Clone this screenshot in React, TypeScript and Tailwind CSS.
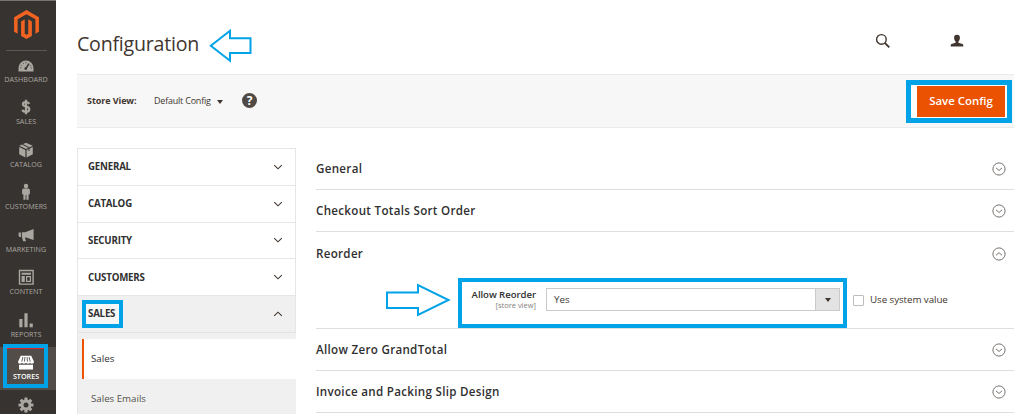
import React from 'react';

const Chevron = ({ up = false }: { up?: boolean }) => (
  <svg width="10" height="8" viewBox="0 0 10 8" fill="none" stroke="#41362f" strokeWidth="1.1">
    <path d={up ? 'M1.2 5.8 L5 2.2 L8.8 5.8' : 'M1.2 2.2 L5 5.8 L8.8 2.2'} />
  </svg>
);

const CircleChevron = ({ up = false }: { up?: boolean }) => (
  <svg width="14" height="14" viewBox="0 0 14 14" fill="none" stroke="#777370" strokeWidth="1">
    <circle cx="7" cy="7" r="6.1" />
    <path d={up ? 'M4 8.3 L7 5.7 L10 8.3' : 'M4 5.9 L7 8.5 L10 5.9'} />
  </svg>
);

const icons: Record<string, React.ReactNode> = {
  DASHBOARD: (
    <g>
      <path d="M1.5 15.5 V12 a7.5 7.5 0 0 1 15 0 V15.5z" />
      <path d="M8.6 13 L12 7.6" stroke="#373330" strokeWidth="1.5" />
      <circle cx="8.7" cy="12.6" r="1.3" fill="#373330" />
      <path d="M3.8 12.3 a5.2 5.2 0 0 1 7-5.2" fill="none" stroke="#373330" strokeWidth=".9" strokeDasharray="1 1.6" />
      <path d="M13.5 9.3 a5 5 0 0 1 .8 3.3" fill="none" stroke="#373330" strokeWidth=".9" strokeDasharray="1 1.3" />
    </g>
  ),
  SALES: (
    <path d="M12.3 5.8 C11.5 4.6 10.2 4.1 8.8 4.1 C6.9 4.1 5.9 5 5.9 6.2 C5.9 9.3 12.3 7.5 12.3 11.3 C12.3 13 10.9 13.9 9 13.9 C7.3 13.9 6 13.3 5.1 12 M9 1.8 V16.2" fill="none" stroke="#aaa6a0" strokeWidth="2.2" />
  ),
  CATALOG: (
    <g>
      <path d="M9 1.8 L15.8 4.8 L9 8 L2.2 4.8z M2.2 6 L8.4 9 V16.4 L2.2 13.2z M15.8 6 L9.6 9 V16.4 L15.8 13.2z" />
      <path d="M5.2 3.2 L12 6.6 V10" fill="none" stroke="#373330" strokeWidth="1" />
    </g>
  ),
  CUSTOMERS: (
    <path d="M9 .8 a2.2 2.2 0 1 1 0 4.4 a2.2 2.2 0 0 1 0-4.4z M6.5 5.6 h5 q1.3.2 1.4 1.6 v4 h-1.3 V16.8 H9.4 V12 h-.8 v4.8 H6.4 v-5.6 H5.1 v-4 q.1-1.4 1.4-1.6z" />
  ),
  MARKETING: (
    <path d="M16.6 3 V14 L9 11.5 H7.9 L9 15.3 H6.2 L4.9 11.3 V6.3 H8.2z M1.6 6.5 H3.9 V11.1 H2.4 L1.6 10z" />
  ),
  CONTENT: (
    <path fillRule="evenodd" d="M1.8 1.8 h15 v15 h-15z M3.2 3.2 v12.2 h12.2 V3.2z M4.6 4.8 h9.4 v2 H4.6z M4.6 8 h3.2 v6 H4.6z M9 8 h5 v6 H9z M10.2 9.2 v3.6 h2.6 V9.2z" />
  ),
  REPORTS: <path d="M2.3 8 h3.2 v8.3 H2.3z M7.4 2.2 h3.2 v14.1 H7.4z M12.6 12.4 h3.2 v3.9 h-3.2z" />,
  STORES: (
    <g fill="#ffffff">
      <path d="M3.8 2.8 H14.2 L17 8.8 q0 2-2 2 t-2-1 q-.8 1-2 1 t-2-1 q-.8 1-2 1 t-2-1 q-.8 1-2 1 q-2 0-2-2z M2 11.8 h14 v4.8 H2z" />
      <path d="M5.9 4 L4.8 8.6 M7.9 4 L7.5 8.6 M10.1 4 L10.5 8.6 M12.1 4 L13.2 8.6" stroke="#524d49" strokeWidth=".9" />
    </g>
  ),
};

const NavItem = ({ name }: { name: string }) => (
  <div
    className={
      name === 'STORES'
        ? 'relative flex h-[42.5px] flex-col items-center bg-[#524d49] pt-[6px] font-semibold text-white'
        : 'relative flex h-[42.5px] flex-col items-center pt-[6px] text-[#aaa6a0]'
    }
  >
    <svg width="18" height="18" viewBox="0 0 18 18" fill="#aaa6a0" className="shrink-0">
      {icons[name]}
    </svg>
    <span className="mt-px text-[7.2px] leading-[9px]">{name}</span>
    {name === 'STORES' && (
      <span className="absolute -top-[3px] left-[3px] h-[44px] w-[45px] border-[4px] border-[#00a2e8]">
        <span className="block h-px bg-[#e22626]" />
      </span>
    )}
  </div>
);

const navItems = ['DASHBOARD', 'SALES', 'CATALOG', 'CUSTOMERS', 'MARKETING', 'CONTENT', 'REPORTS', 'STORES'];

const Sidebar = () => (
  <aside className="flex w-14 shrink-0 flex-col border-t border-[#77736f] bg-[#373330]">
    <div className="flex h-[49px] shrink-0 justify-center pt-[9px] pr-[4px]">
      <svg width="25" height="29" viewBox="0 0 24 28" fill="#f26322">
        <path d="M12 0 L24 7 V21 L20.6 23 V9 L12 4 L3.4 9 V23 L0 21 V7z" />
        <path d="M6.8 11 L10.3 9 V23 L12 24 L13.7 23 V9 L17.2 11 V25 L12 28 L6.8 25z" />
      </svg>
    </div>
    <div className="ml-[6px] h-px w-[41px] shrink-0 bg-[#5d5854]" />
    <nav className="-mt-[1.5px] flex flex-col [&>div]:pr-[4px]">
      {navItems.map((n) => (
        <NavItem key={n} name={n} />
      ))}
    </nav>
    <div className="flex justify-center pt-[7px] pr-[4px]">
      <svg width="16" height="16" viewBox="-8 -8 16 16" fill="#aaa6a0">
        {[0, 45, 90, 135].map((a) => (
          <rect key={a} x="-1.6" y="-7.5" width="3.2" height="15" rx=".5" transform={`rotate(${a})`} />
        ))}
        <circle r="5.4" />
        <circle r="2.5" fill="#373330" />
      </svg>
    </div>
  </aside>
);

const Header = () => (
  <header className="flex h-[74px] shrink-0 items-start">
    <h1 className="mt-[30px] w-[132px] text-[19.6px] leading-[28px] tracking-[-0.22px] whitespace-nowrap text-[#41362f]">Configuration</h1>
    <svg width="44" height="34" viewBox="0 0 44 34" fill="none" stroke="#00a2e8" strokeWidth="2" className="mt-[29px]">
      <path d="M1.8 16.7 L21 1.8 V9.3 H41.5 V24 H21 V31.7z" />
    </svg>
    <svg width="16" height="16" viewBox="0 0 16 16" fill="none" stroke="#41362f" className="mt-[33px] ml-[622px]">
      <circle cx="6.4" cy="6.4" r="4.8" strokeWidth="1.4" />
      <path d="M9.8 9.8 L14.3 14.3" strokeWidth="1.9" />
    </svg>
    <svg width="14" height="14" viewBox="0 0 14 14" fill="#41362f" className="mt-[34px] ml-[59px]">
      <path d="M7 .8 C9 .8 10 2 9.9 3.9 C9.8 5.8 9 6.8 8.5 7.3 V8.7 L12.5 10 Q13.3 10.4 13.3 11.2 V12.5 H.7 V11.2 Q.7 10.4 1.5 10 L5.5 8.7 V7.3 C5 6.8 4.2 5.8 4.1 3.9 C4 2 5 .8 7 .8z" />
    </svg>
  </header>
);

const Toolbar = () => (
  <div className="flex h-[54px] w-[937px] shrink-0 items-center border-y border-[#ebebeb] bg-[#f7f7f7] pl-[10px] text-[#41362f]">
    <span className="w-[67px] text-[9px] font-bold tracking-[-0.08px] whitespace-nowrap">Store View:</span>
    <span className="w-[63px] text-[9px] tracking-[-0.22px] whitespace-nowrap">Default Config</span>
    <svg width="6" height="4" viewBox="0 0 6 4" fill="#41362f" className="mt-px"><path d="M0 0 H6 L3 4z" /></svg>
    <span className="-mt-px ml-[19px] flex size-[15px] items-center justify-center rounded-full bg-[#514943] text-[12px] leading-none font-bold text-white">?</span>
    <div className="mr-[2px] ml-auto flex h-[43px] w-[106px] shrink-0 items-center justify-center border-[5px] border-[#00a2e8] bg-[#fdfdfd] pl-[4px]">
      <button className="h-[31px] w-[88px] bg-[#eb5202] text-[11.4px] font-semibold tracking-[0.02px] whitespace-nowrap text-white">Save Config</button>
    </div>
  </div>
);

const ConfigNav = () => (
  <div className="flex w-[219px] shrink-0 flex-col border border-[#e6e6e6] text-[#303030]">
    {['GENERAL', 'CATALOG', 'SECURITY', 'CUSTOMERS'].map((t) => (
      <div key={t} className="flex h-[36.8px] shrink-0 items-center justify-between border-b border-[#e6e6e6] pr-[12px] pl-[10px] text-[9.7px] font-bold tracking-[-0.2px]">
        <span className="pt-px">{t}</span>
        <Chevron />
      </div>
    ))}
    <div className="flex h-[36.8px] shrink-0 items-center justify-between border-b border-[#e3e3e3] bg-[#f0f0f0] pr-[12px] pl-[4px] text-[9.7px] font-bold tracking-[-0.2px]">
      <span className="-mt-px flex h-[28px] w-[41px] items-center border-[4px] border-[#00a2e8] bg-[#f7f7f7] pt-px pl-[2px]">SALES</span>
      <Chevron up />
    </div>
    <div className="-mr-px flex h-[82px] flex-col bg-[#f0f0f0] pt-[6px] pl-[4px]">
      <div className="flex h-10 shrink-0 items-center border-l-2 border-[#eb5202] bg-white pt-px pl-[7px] text-[9.8px] font-medium">Sales</div>
      <div className="flex h-10 shrink-0 items-center pl-[9px] text-[9.7px] text-[#55504c]">Sales Emails</div>
    </div>
  </div>
);

const SectionTitle = ({ title, up = false }: { title: string; up?: boolean }) => (
  <div className="flex h-[41px] shrink-0 items-center justify-between pr-[8px]">
    <h2 className="text-[11.6px] font-semibold tracking-[0.3px] text-[#303030]">{title}</h2>
    <CircleChevron up={up} />
  </div>
);

const ReorderField = () => (
  <div className="flex h-[55px] items-start pt-[4px] pl-[69px]">
    <svg width="66" height="34" viewBox="0 0 66 34" fill="none" stroke="#00a2e8" strokeWidth="2" className="mt-[5px] shrink-0">
      <path d="M2 9.5 H33 V2 L63.5 17 L33 32 V25 H2z" />
    </svg>
    <div className="ml-[7px] flex h-[50px] w-[389px] shrink-0 items-start border-[4px] border-[#00a2e8] bg-white pt-[6px]">
      <div className="w-[74px] text-right text-[#303030]">
        <div className="pt-px text-[9.6px] leading-[12px] font-semibold tracking-[-0.06px] whitespace-nowrap">Allow Reorder</div>
        <div className="text-[7.5px] leading-[8px] text-[#85807c]">[store view]</div>
      </div>
      <div className="ml-[10px] flex h-[23px] w-[294px] border border-[#cacaca] text-[9.8px] text-[#403b37]">
        <span className="flex flex-1 items-center pt-px pl-[7px]">Yes</span>
        <span className="flex w-6 items-center justify-center border-l border-[#cacaca] bg-[#e3e3e3]">
          <svg width="6" height="4" viewBox="0 0 6 4" fill="#41362f"><path d="M0 0 H6 L3 4z" /></svg>
        </span>
      </div>
    </div>
    <span className="mt-[17px] ml-[6px] size-[11px] shrink-0 rounded-[1px] border border-[#bdbdbd] bg-white" />
    <span className="mt-[15px] ml-[6px] text-[9.8px] leading-[14px] tracking-[-0.08px] whitespace-nowrap text-[#41362f]">Use system value</span>
  </div>
);

const Sections = () => (
  <div className="ml-[20px] flex w-[698px] shrink-0 flex-col *:border-b *:border-[#dedede]">
    <div className="h-[42px] shrink-0"><SectionTitle title="General" /></div>
    <div className="h-[42px] shrink-0"><SectionTitle title="Checkout Totals Sort Order" /></div>
    <div className="h-[97px] shrink-0 pt-px">
      <SectionTitle title="Reorder" up />
      <ReorderField />
    </div>
    <div className="h-[42px] shrink-0"><SectionTitle title="Allow Zero GrandTotal" /></div>
    <div className="h-[42px] shrink-0"><SectionTitle title="Invoice and Packing Slip Design" /></div>
  </div>
);

export default function App() {
  return (
    <div className="flex h-[414px] w-[1024px] overflow-hidden bg-white font-['Open_Sans',sans-serif]">
      <Sidebar />
      <main className="flex min-w-0 flex-1 flex-col pl-[21px]">
        <Header />
        <Toolbar />
        <div className="flex h-[286px] shrink-0 items-start pt-[20px]">
          <ConfigNav />
          <Sections />
        </div>
      </main>
    </div>
  );
}
